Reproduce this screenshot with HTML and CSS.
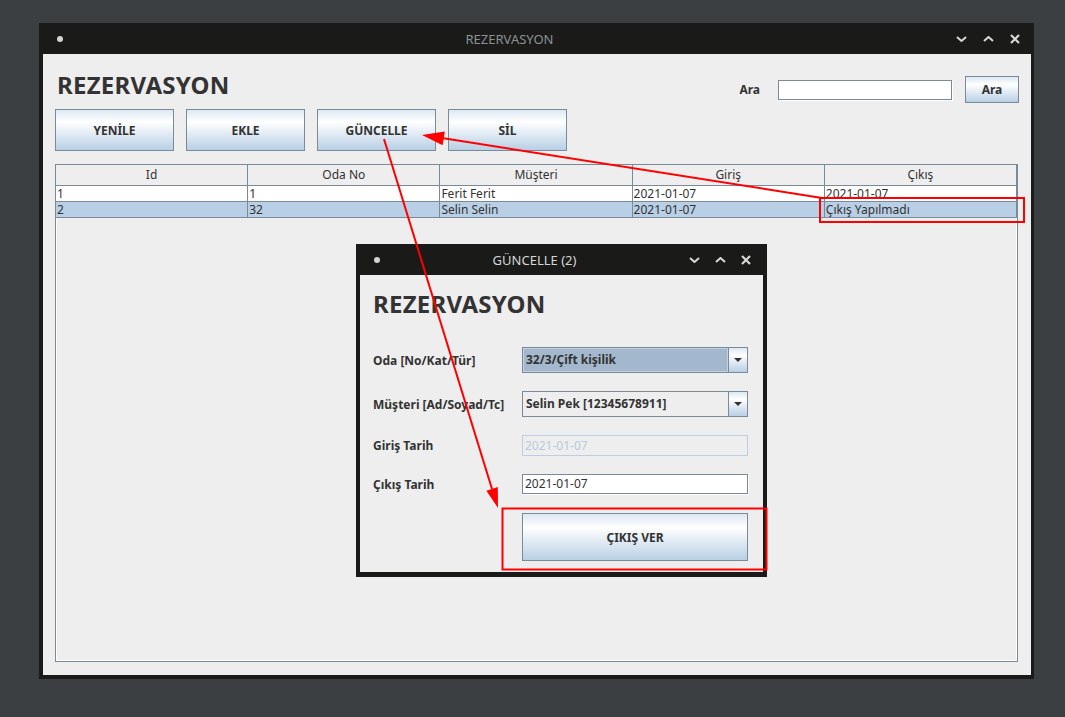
FILE: index.html
```html
<!DOCTYPE html>
<html lang="tr">
<head>
<meta charset="utf-8">
<title>REZERVASYON</title>
<link rel="stylesheet" href="styles.css">
</head>
<body>
<div class="window main-window">
  <div class="titlebar">
    <span class="tb-dot"></span>
    <span class="tb-title">REZERVASYON</span>
    <div class="tb-controls">
      <svg width="11" height="6" viewBox="0 0 11 6"><polyline points="1,1 5.5,5 10,1" fill="none" stroke="#d8d8d8" stroke-width="2"/></svg>
      <svg width="11" height="6" viewBox="0 0 11 6"><polyline points="1,5 5.5,1 10,5" fill="none" stroke="#d8d8d8" stroke-width="2"/></svg>
      <svg width="10" height="10" viewBox="0 0 10 10"><path d="M1,1 L9,9 M9,1 L1,9" stroke="#d8d8d8" stroke-width="2.2"/></svg>
    </div>
  </div>
  <div class="content main-content">
    <div class="top-row">
      <h1 class="heading">REZERVASYON</h1>
      <div class="search">
        <span class="search-label">Ara</span>
        <div class="tf search-field"></div>
        <button class="btn btn-search">Ara</button>
      </div>
    </div>
    <div class="toolbar">
      <button class="btn btn-action">YENİLE</button>
      <button class="btn btn-action">EKLE</button>
      <button class="btn btn-action">GÜNCELLE</button>
      <button class="btn btn-action">SİL</button>
    </div>
    <div class="table">
      <div class="trow thead">
        <div class="cell">Id</div>
        <div class="cell">Oda No</div>
        <div class="cell">Müşteri</div>
        <div class="cell">Giriş</div>
        <div class="cell">Çıkış</div>
      </div>
      <div class="trow tdata">
        <div class="cell">1</div>
        <div class="cell">1</div>
        <div class="cell">Ferit Ferit</div>
        <div class="cell">2021-01-07</div>
        <div class="cell">2021-01-07</div>
      </div>
      <div class="trow tdata selected">
        <div class="cell">2</div>
        <div class="cell">32</div>
        <div class="cell">Selin Selin</div>
        <div class="cell">2021-01-07</div>
        <div class="cell">Çıkış Yapılmadı</div>
      </div>
    </div>
  </div>
</div>

<div class="window dialog">
  <div class="titlebar">
    <span class="tb-dot"></span>
    <span class="tb-title">GÜNCELLE (2)</span>
    <div class="tb-controls dlg-controls">
      <svg width="11" height="6" viewBox="0 0 11 6"><polyline points="1,1 5.5,5 10,1" fill="none" stroke="#d8d8d8" stroke-width="2"/></svg>
      <svg width="11" height="6" viewBox="0 0 11 6"><polyline points="1,5 5.5,1 10,5" fill="none" stroke="#d8d8d8" stroke-width="2"/></svg>
      <svg width="10" height="10" viewBox="0 0 10 10"><path d="M1,1 L9,9 M9,1 L1,9" stroke="#d8d8d8" stroke-width="2.2"/></svg>
    </div>
  </div>
  <div class="content dialog-content">
    <h1 class="heading dlg-heading">REZERVASYON</h1>
    <div class="form">
      <span class="form-label">Oda [No/Kat/Tür]</span>
      <div class="combo combo-selected">
        <span class="combo-text">32/3/Çift kişilik</span>
        <span class="combo-arrow"><span class="tri"></span></span>
      </div>
      <span class="form-label">Müşteri [Ad/Soyad/Tc]</span>
      <div class="combo">
        <span class="combo-text">Selin Pek [12345678911]</span>
        <span class="combo-arrow"><span class="tri"></span></span>
      </div>
      <span class="form-label">Giriş Tarih</span>
      <div class="tf tf-disabled">2021-01-07</div>
      <span class="form-label">Çıkış Tarih</span>
      <div class="tf tf-date">2021-01-07</div>
      <button class="btn btn-submit">ÇIKIŞ VER</button>
    </div>
  </div>
</div>

<svg class="annotations" width="1065" height="717" viewBox="0 0 1065 717">
  <line x1="822" y1="198" x2="442" y2="138" stroke="#ff0000" stroke-width="2"/>
  <polygon points="422,135 442.6,145.3 444.8,131.5" fill="#ff0000"/>
  <line x1="384" y1="139" x2="492" y2="489" stroke="#ff0000" stroke-width="2"/>
  <polygon points="498,508 497.8,487.1 486.4,490.7" fill="#ff0000"/>
  <rect x="820" y="198" width="204" height="24" fill="none" stroke="#ff0000" stroke-width="2"/>
  <rect x="502.5" y="508.5" width="264" height="61" fill="none" stroke="#ff0000" stroke-width="2"/>
</svg>
</body>
</html>
```

FILE: styles.css
```css
* { box-sizing: border-box; }
html, body { margin: 0; padding: 0; }
body {
  width: 1065px;
  height: 717px;
  background: #3b3f42;
  font-family: "Noto Sans", "DejaVu Sans", sans-serif;
  color: #333;
  overflow: hidden;
  position: relative;
}

.window {
  position: absolute;
  background: #1a1b18;
  display: flex;
  flex-direction: column;
}
.main-window {
  left: 39px;
  top: 23px;
  width: 995px;
  height: 656px;
  padding: 0 3px 4px 4px;
}
.dialog {
  left: 356px;
  top: 244px;
  width: 411px;
  height: 333px;
  padding: 0 4px 5px 4px;
  z-index: 5;
}

.titlebar {
  height: 31px;
  flex: none;
  display: flex;
  align-items: center;
}
.tb-dot {
  width: 6px;
  height: 6px;
  border-radius: 50%;
  background: #d4d4d4;
  margin-left: 14px;
}
.tb-title {
  flex: 1;
  text-align: center;
  font-size: 13px;
}
.main-window .tb-title { color: #8c9196; }
.dialog .tb-title { color: #d4d7da; }
.tb-controls {
  display: flex;
  align-items: center;
  gap: 16px;
  padding-right: 11px;
}
.dlg-controls { gap: 15px; padding-right: 12px; }
.tb-controls svg { display: block; }

.content {
  flex: 1;
  background: #eeeeee;
  display: flex;
  flex-direction: column;
}
.main-content { padding: 0 12px 13px 12px; }

.heading {
  margin: 14px 0 0 2px;
  font-size: 24px;
  font-weight: 700;
  letter-spacing: 0.25px;
  line-height: normal;
  color: #333;
}

.top-row {
  display: flex;
  justify-content: space-between;
  align-items: flex-start;
}
.search {
  margin-top: 22px;
  display: flex;
  align-items: center;
  height: 27px;
}
.search-label {
  font-size: 12px;
  font-weight: 700;
  margin-right: 18px;
}
.tf {
  border: 1px solid #7a8a99;
  background: #fff;
  box-shadow: 1px 1px 0 #fff;
  font-size: 12px;
  padding-left: 2px;
}
.search-field {
  width: 174px;
  height: 20px;
  margin-right: 13px;
}

.btn {
  border: 1px solid #7a8a99;
  background: linear-gradient(#dde8f3 0%, #ffffff 30%, #b8cfe5 100%);
  font-family: "Noto Sans", "DejaVu Sans", sans-serif;
  font-size: 12px;
  font-weight: 700;
  color: #333;
  padding: 0;
}
.btn-search { width: 54px; height: 27px; }

.toolbar {
  display: flex;
  gap: 12px;
  margin-top: 6px;
}
.btn-action { width: 119px; height: 42px; }

.table {
  margin-top: 13px;
  margin-right: 1px;
  flex: 1;
  border: 1px solid #7a8a99;
  background: #eeeeee;
  box-shadow: inset 0 0 0 1px #fff;
}
.trow {
  display: grid;
  grid-template-columns: repeat(5, 1fr);
}
.cell {
  border-right: 1px solid #7a8a99;
  border-bottom: 1px solid #7a8a99;
  font-size: 12px;
  white-space: nowrap;
  overflow: hidden;
}
.thead .cell {
  height: 21px;
  line-height: 20px;
  text-align: center;
  background: #eeeeee;
}
.tdata .cell {
  height: 16px;
  line-height: 15px;
  padding-left: 1px;
  background: #fff;
}
.tdata.selected .cell { background: #b8cfe5; }

.dialog-content { padding: 0 15px 11px 13px; }
.dlg-heading { margin: 12px 0 0 0; }

.form {
  margin-top: 27px;
  display: grid;
  grid-template-columns: 149px 226px;
  grid-template-rows: 26px 26px 21px 20px 49px;
  row-gap: 18px;
  align-items: center;
}
.form-label {
  font-size: 12px;
  font-weight: 700;
}
.combo {
  height: 26px;
  display: flex;
  border: 1px solid #7a8a99;
  background: #eeeeee;
}
.combo-text {
  flex: 1;
  padding-left: 3px;
  font-size: 12px;
  font-weight: 700;
  line-height: 23px;
}
.combo-selected .combo-text {
  background: #a3b8cc;
  box-shadow: inset 0 0 0 1px #c3d0dd;
}
.combo-arrow {
  width: 19px;
  border-left: 1px solid #7a8a99;
  background: linear-gradient(#dde8f3 0%, #ffffff 30%, #b8cfe5 100%);
  display: flex;
  align-items: center;
  justify-content: center;
}
.tri {
  width: 0;
  height: 0;
  border-left: 4px solid transparent;
  border-right: 4px solid transparent;
  border-top: 4px solid #333;
}
.tf-disabled {
  height: 21px;
  line-height: 19px;
  border-color: #b8cfe5;
  background: #eeeeee;
  box-shadow: none;
  color: #b8cadb;
}
.tf-date {
  height: 20px;
  line-height: 18px;
  color: #333;
}
.btn-submit {
  grid-column: 2;
  height: 48px;
  align-self: end;
}

.annotations {
  position: absolute;
  left: 0;
  top: 0;
  z-index: 10;
  pointer-events: none;
}
```
